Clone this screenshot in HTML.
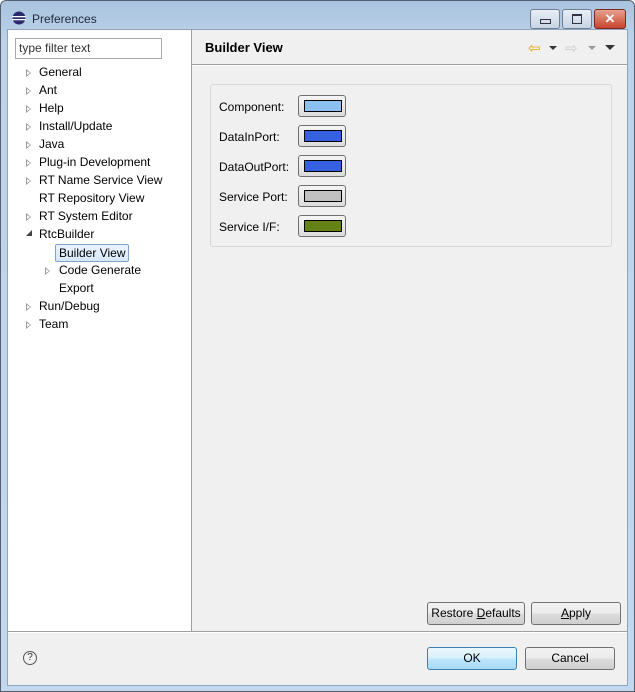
<!DOCTYPE html><html><head><style>
body{margin:0;width:635px;height:692px;overflow:hidden;font-family:"Liberation Sans",sans-serif;font-size:12px;color:#000}
.win{position:absolute;left:0;top:0;width:633px;height:690px;border:1px solid #555f6e;border-radius:6px 6px 0 0;background:linear-gradient(#a9c3de,#bcd3ea 40px,#c3d8ee)}
.title{position:absolute;left:31px;top:11px;font-size:12px;color:#1e2a3a}
.cb{position:absolute;top:8px;height:18px;border:1px solid #6f7f95;border-radius:3px;background:linear-gradient(#e8eef6,#c8d4e4)}
.body{position:absolute;left:6px;top:28px;width:619px;height:655px;background:#f0f0f0;border:1px solid #8ea3bd}
.left{position:absolute;left:0;top:0;width:183px;height:601px;background:#fff;border-right:1px solid #a0a0a0}
.filter{position:absolute;left:7px;top:8px;width:142px;height:19px;border:1px solid #a9a9a9;padding-left:3px;line-height:19px;color:#333}
.it{position:absolute;height:18px;line-height:18px;white-space:nowrap;margin-top:-1px}
.ar{position:absolute;width:0;height:0;border-left:5px solid #999;border-top:4px solid transparent;border-bottom:4px solid transparent;top:6px;margin-top:-1px}
.ar:after{content:"";position:absolute;left:-4px;top:-2px;border-left:3px solid #fff;border-top:2px solid transparent;border-bottom:2px solid transparent}
.hdr{position:absolute;left:197px;top:10px;font-weight:bold;font-size:13px}
.grp{position:absolute;left:202px;top:54px;width:400px;height:161px;border:1px solid #d8d8d8;border-radius:3px}
.lb{position:absolute;left:8px}
.sw{position:absolute;left:87px;width:46px;height:20px;border:1px solid #707070;border-radius:3px;background:linear-gradient(#f5f5f5,#dcdcdc)}
.sw i{position:absolute;left:5px;top:4px;width:36px;height:10px;border:1px solid #000}
.btn{position:absolute;height:21px;border:1px solid #707070;border-radius:3px;background:linear-gradient(#f2f2f2,#ebebeb 50%,#dddddd 51%,#cfcfcf);text-align:center;line-height:21px}
</style></head><body><div class="win">
<svg style="position:absolute;left:11px;top:10px" width="14" height="14"><circle cx="7" cy="7" r="6.5" fill="#2c2a6e"/><rect x="0" y="5" width="14" height="1.3" fill="#fff"/><rect x="0" y="8" width="14" height="1.3" fill="#fff"/></svg>
<div class="title">Preferences</div>
<div class="cb" style="left:529px;width:28px"><div style="position:absolute;left:9px;top:9px;width:9px;height:3px;border:1px solid #334"></div></div>
<div class="cb" style="left:561px;width:28px"><div style="position:absolute;left:9px;top:4px;width:8px;height:7px;border:1px solid #334;border-top-width:2px"></div></div>
<div class="cb" style="left:593px;width:30px;background:linear-gradient(#e8a090,#c8442e);border-color:#7a2a20;color:#fff;font-weight:bold;text-align:center;line-height:18px;font-size:13px">✕</div>
<div class="body">
<div class="left">
<div class="filter">type filter text</div>
<div class="it" style="left:31px;top:34px">General</div><div class="ar" style="left:18px;top:40px"></div>
<div class="it" style="left:31px;top:52px">Ant</div><div class="ar" style="left:18px;top:58px"></div>
<div class="it" style="left:31px;top:70px">Help</div><div class="ar" style="left:18px;top:76px"></div>
<div class="it" style="left:31px;top:88px">Install/Update</div><div class="ar" style="left:18px;top:94px"></div>
<div class="it" style="left:31px;top:106px">Java</div><div class="ar" style="left:18px;top:112px"></div>
<div class="it" style="left:31px;top:124px">Plug-in Development</div><div class="ar" style="left:18px;top:130px"></div>
<div class="it" style="left:31px;top:142px">RT Name Service View</div><div class="ar" style="left:18px;top:148px"></div>
<div class="it" style="left:31px;top:160px">RT Repository View</div>
<div class="it" style="left:31px;top:178px">RT System Editor</div><div class="ar" style="left:18px;top:184px"></div>
<div class="it" style="left:31px;top:196px">RtcBuilder</div><div style="position:absolute;left:18px;top:200px;border-right:6px solid #444;border-top:6px solid transparent"></div>
<div class="it" style="left:47px;top:214px;height:16px;line-height:16px;margin-top:0;padding:0 3px;border:1px solid #7da2ce;border-radius:2px;background:linear-gradient(#eaf3fd,#d7e8fb)">Builder View</div>
<div class="it" style="left:51px;top:232px">Code Generate</div><div class="ar" style="left:37px;top:238px"></div>
<div class="it" style="left:51px;top:250px">Export</div>
<div class="it" style="left:31px;top:268px">Run/Debug</div><div class="ar" style="left:18px;top:274px"></div>
<div class="it" style="left:31px;top:286px">Team</div><div class="ar" style="left:18px;top:292px"></div>
</div>
<div class="hdr">Builder View</div>
<div style="position:absolute;left:520px;top:9px;color:#e0a800;font-size:15px">⇦</div>
<div style="position:absolute;left:541px;top:16px;border-top:4px solid #333;border-left:4px solid transparent;border-right:4px solid transparent"></div>
<div style="position:absolute;left:557px;top:9px;color:#ccc;font-size:15px">⇨</div>
<div style="position:absolute;left:580px;top:16px;border-top:4px solid #999;border-left:4px solid transparent;border-right:4px solid transparent"></div>
<div style="position:absolute;left:597px;top:15px;border-top:5px solid #333;border-left:5px solid transparent;border-right:5px solid transparent"></div>
<div style="position:absolute;left:184px;top:34px;width:435px;border-top:1px solid #a0a0a0;border-bottom:1px solid #fff"></div>
<div class="grp">
<div class="lb" style="top:15px">Component:</div><div class="sw" style="top:10px"><i style="background:#8cc0f0"></i></div>
<div class="lb" style="top:45px">DataInPort:</div><div class="sw" style="top:40px"><i style="background:#3560e0"></i></div>
<div class="lb" style="top:75px">DataOutPort:</div><div class="sw" style="top:70px"><i style="background:#3560e0"></i></div>
<div class="lb" style="top:105px">Service Port:</div><div class="sw" style="top:100px"><i style="background:#c0c0c0"></i></div>
<div class="lb" style="top:135px">Service I/F:</div><div class="sw" style="top:130px"><i style="background:#648216"></i></div>
</div>
<div class="btn" style="left:419px;top:572px;width:96px">Restore <u>D</u>efaults</div>
<div class="btn" style="left:523px;top:572px;width:88px"><u>A</u>pply</div>
<div style="position:absolute;left:0;top:601px;width:619px;border-top:1px solid #a0a0a0;border-bottom:1px solid #fff"></div>
<div style="position:absolute;left:15px;top:621px;width:12px;height:12px;border:1px solid #555;border-radius:50%;font-size:10px;text-align:center;line-height:12px;color:#333">?</div>
<div class="btn" style="left:419px;top:617px;width:88px;border-color:#3c7fb1;background:linear-gradient(#eaf6fd,#d9f0fc 50%,#bee6fd 51%,#a7d9f5)">OK</div>
<div class="btn" style="left:517px;top:617px;width:88px">Cancel</div>
</div></div></body></html>
